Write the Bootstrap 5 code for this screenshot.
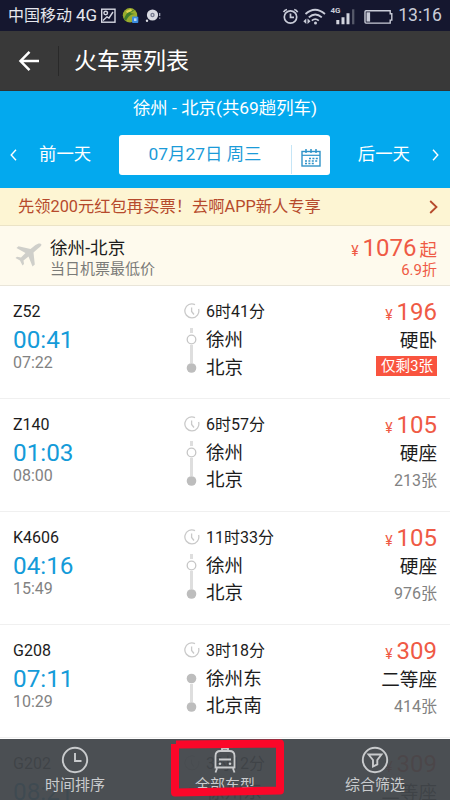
<!DOCTYPE html>
<html lang="zh-CN">
<head>
<meta charset="utf-8">
<meta name="viewport" content="width=device-width, initial-scale=1">
<title>火车票列表</title>
<link href="https://cdn.jsdelivr.net/npm/bootstrap@5.3.0/dist/css/bootstrap.min.css" rel="stylesheet">
<style>
body{font-family:Roboto,"Noto Sans CJK SC",sans-serif;height:800px;overflow:hidden;color:#1c1c1c;background:#fff;line-height:1}
svg{display:block;flex:none}
.screen{width:450px;height:800px}
.statusbar{height:31px;background:#15172f;color:#d9dbe6;padding:0 8px}
.carrier{font-size:16px;width:89px;white-space:nowrap;color:#e6e7ee}
.carrier span{font-size:17px}
.clock{font-size:17.6px;color:#c9ccd8;width:44px;text-align:right;white-space:nowrap}
.titlebar{height:60px;background:#393939;color:#fff;padding-left:18px;border-bottom:1px solid #2f3335}
.titlebar .sep{width:1px;height:30px;background:#292929;margin:0 15px 0 18px}
.titlebar h1{font-size:23px;font-weight:400;padding-top:3px}
.daybar{height:97px;background:#03a9ee;color:#fff;font-size:17.4px}
.route{height:34px;line-height:34px}
.days{height:40px;margin-top:10px;padding:0 11px 0 10px}
.prev{width:109px}
.prev span{margin-left:22px}
.next span{margin-right:22px}
.datebox{width:211px;height:40px;background:#fff;border-radius:3px;color:#1b9bd8}
.datebox .vsep{width:1px;height:29px;margin-top:10px;background:#c5e5f6}
.cal{margin:14px 9px 0}
.promo{height:38px;background:#fdf5d3;border-bottom:1px solid #ebe3c6;color:#b64a2c;font-size:16.3px;padding:2px 12px 0 18px}
.promo svg{margin-top:-2px}
.flight{height:60px;background:#fefaed;border-bottom:1px solid #e9e5d9;padding:0 13px 0 15px}
.f-text{padding-top:12px}
.f-name{font-size:17.6px;line-height:21px}
.f-sub{font-size:15px;line-height:20px;color:#7b7b78}
.price{color:#ef5a45}
.price small{font-size:14px;margin-right:4px}
.price b{font-size:24px;font-weight:400}
.from{line-height:28px;white-space:nowrap}
.from .qi{font-size:17.5px;margin-left:3px}
.off{font-size:15px;line-height:13px;margin-top:-1px}
.train{height:112.9px;border-bottom:1px solid #f0f0f0;padding:15px 13px 0}
.no{font-size:16px;line-height:21px;margin-bottom:4px}
.dep{font-size:24.3px;line-height:27px;color:#149bd9}
.arr{font-size:16px;line-height:20px;color:#828282}
.c-left{width:170px}
.c-icons{width:24px;padding-top:2px}
.c-mid{width:130px;margin-left:-1px}
.dur{font-size:16px;line-height:21px;margin-bottom:5px}
.stn{font-size:18.6px;line-height:27.5px}
.c-right{margin-top:-2px}
.c-right .price{height:27px;line-height:27px;white-space:nowrap}
.seat{font-size:18.6px;line-height:27px;margin-top:2px}
.left-n{font-size:16px;line-height:22px;color:#828282;margin-top:2px}
.few{font-size:14.6px;line-height:20px;background:#f9543f;color:#fff;padding:0 4px 0 5px;margin-top:1px}
.tabs{height:61px;background:rgba(65,70,74,.95);color:#c9cbcd;font-size:15px;padding-top:7px}
.tabs .lab{margin-top:2px;line-height:18px}
.frame{left:168px;top:736px}
</style>
<script src="https://cdn.jsdelivr.net/npm/bootstrap@5.3.0/dist/js/bootstrap.bundle.min.js"></script>
</head>
<body>
<svg width="0" height="0" class="position-absolute">
  <symbol id="trip" viewBox="0 0 18 76">
    <path d="M12 1.600A7 7 0 1 0 15.600 6M8.600 4.500V8.500L11 11.500" fill="none" stroke="#c9c9c9" stroke-width="1.300"/>
    <path d="M8.500 25v5M8.500 42v18" stroke="#dedede" stroke-width="3"/>
    <circle cx="8.500" cy="36.500" r="4.300" fill="#fff" stroke="#c6c6c6" stroke-width="1.300"/>
    <circle cx="8.500" cy="65" r="4.800" fill="#bdbdbd"/>
  </symbol>
  <symbol id="trip-full" viewBox="0 0 18 76">
    <path d="M12 1.600A7 7 0 1 0 15.600 6M8.600 4.500V8.500L11 11.500" fill="none" stroke="#c9c9c9" stroke-width="1.300"/>
    <path d="M8.500 42v18" stroke="#dedede" stroke-width="3"/>
    <circle cx="8.500" cy="36.500" r="4.800" fill="#bdbdbd"/>
    <circle cx="8.500" cy="65" r="4.800" fill="#bdbdbd"/>
  </symbol>
</svg>
<div class="screen position-relative overflow-hidden">
  <div class="statusbar d-flex align-items-center">
    <div class="carrier">中国移动 <span>4G</span></div>
    <svg width="66" height="18" viewBox="97 7 66 18">
      <g fill="none" stroke="#d5d7e2" stroke-width="1.400"><rect x="101.700" y="9.200" width="13.300" height="13"/><circle cx="105.700" cy="13" r="1.800"/><path d="M103 20.500L107 16.800L109 18L113 12"/></g>
      <circle cx="130" cy="15.300" r="7.200" fill="#9aac2d"/><path d="M124 19c2-6 6-9 11-9l-5 3 5 1c-5 0-7 3-9 7z" fill="#3f7c2b"/><path d="M126 11l5-2 1 2-5 2z" fill="#e3d451"/>
      <rect x="132" y="16.500" width="6.300" height="6.500" rx="1" fill="#3c8de0"/><rect x="134" y="18.300" width="2.500" height="2.700" fill="#b8d8f8"/>
      <circle cx="152.500" cy="15" r="5.600" fill="#d9dae2"/><circle cx="152.500" cy="15" r="2.200" fill="#777b91"/><circle cx="152.500" cy="15" r=".8" fill="#fff"/>
      <circle cx="147" cy="20.700" r="1.200" fill="#d9dae2"/><path d="M159.700 13v3M159.700 17.500v1.300" stroke="#a7aabd" stroke-width="1.200"/>
    </svg>
    <svg class="ms-auto" width="116" height="24" viewBox="282 3 116 24">
      <g fill="none" stroke="#c9ccd8" stroke-width="1.700"><circle cx="290.500" cy="16" r="6.200"/><path d="M290.500 12.500V16.300H294M283.600 11.200Q284.600 8.800 287 8.500M294.200 8.500Q296.700 8.800 297.600 11.200"/>
      <path d="M305.500 13Q315 4.500 325 13M308.800 16.400Q315.300 10.500 321.800 16.400M311.800 19.600Q315.300 16.600 318.800 19.600" stroke-width="1.800"/></g>
      <circle cx="315.500" cy="22" r="1.500" fill="#c9ccd8"/><path d="M306.300 17.500v5.500l-3-2.700zM307.500 17.500v5.500l3-2.700z" fill="#c9ccd8"/>
      <text x="330.500" y="11.500" font-size="8" font-weight="700" fill="#c9ccd8">4G</text>
      <path d="M337.800 19v4.300M343 16.300v7M348 12.300v11" stroke="#d2d4de" stroke-width="3"/><path d="M353.200 8.300v15" stroke="#555869" stroke-width="2.300"/>
      <path d="M366 9.700h24.200v3h1.600v6.400h-1.600v3H366a1 1 0 0 1-1-1V10.700a1 1 0 0 1 1-1z" fill="none" stroke="#c9ccd8" stroke-width="1.400"/><rect x="366.500" y="11.300" width="3.600" height="9.300" fill="#c9ccd8"/>
    </svg>
    <div class="clock">13:16</div>
  </div>

  <div class="titlebar d-flex align-items-center">
    <svg width="22" height="22" viewBox="0 0 22 22"><path d="M11.500 1.800L2.500 11L11.500 20.200M2.500 11H21" fill="none" stroke="#fff" stroke-width="2.500"/></svg>
    <div class="sep"></div>
    <h1 class="m-0">火车票列表</h1>
  </div>

  <div class="daybar">
    <div class="route text-center">徐州 - 北京(共69趟列车)</div>
    <div class="days d-flex align-items-center">
      <div class="prev d-flex align-items-center">
        <svg width="7" height="12" viewBox="0 0 7 12"><path d="M6 .8L1.200 6L6 11.200" fill="none" stroke="#fff" stroke-width="1.400"/></svg>
        <span>前一天</span>
      </div>
      <div class="datebox d-flex">
        <div class="flex-fill d-flex align-items-center justify-content-center">07月27日 周三</div>
        <div class="vsep"></div>
        <svg class="cal" width="20" height="18" viewBox="0 0 20 18"><g fill="none" stroke="#2f93c8"><rect x="1" y="2.500" width="18" height="14.500" stroke-width="1.400"/><path d="M1 6.300H19" stroke-width="1.200"/><path d="M5 0v4M10 0v4M15 0v4" stroke-width="1.500"/><path d="M8 9.500h9M4 12h12.500M4 14.500h9" stroke-width="1.600" stroke-dasharray="2 1.400"/></g></svg>
      </div>
      <div class="next d-flex align-items-center ms-auto">
        <span>后一天</span>
        <svg width="7" height="12" viewBox="0 0 7 12"><path d="M1 .8L5.800 6L1 11.200" fill="none" stroke="#fff" stroke-width="1.400"/></svg>
      </div>
    </div>
  </div>

  <div class="promo d-flex align-items-center justify-content-between">
    <span>先领200元红包再买票！去啊APP新人专享</span>
    <svg width="9" height="14" viewBox="0 0 9 14"><path d="M1.200 1L7.500 7L1.200 13" fill="none" stroke="#b64a2c" stroke-width="1.800"/></svg>
  </div>

  <div class="flight d-flex">
    <svg class="mt-3" width="27" height="28" viewBox="0 0 27 28"><path d="M26.300 2.200C25.500.800 22.500 1.500 20.500 3L15.500 7L3.500 4.300L1.500 6L10.500 11L6 15.500L2 14.800L.500 16L5 18.500L7.500 23.500L9 22L8.500 18.500L13.500 14.500L17.500 24.500L19.800 22.500L18.500 10.500L23 6.500C25 5 26.800 3.400 26.300 2.200Z" fill="#cfcfca"/></svg>
    <div class="ms-2 f-text">
      <div class="f-name">徐州-北京</div>
      <div class="f-sub">当日机票最低价</div>
    </div>
    <div class="price ms-auto text-end pt-2">
      <div class="from"><small>¥</small><b>1076</b><span class="qi">起</span></div>
      <div class="off">6.9折</div>
    </div>
  </div>

  <div class="train d-flex">
    <div class="c-left"><div class="no">Z52</div><div class="dep">00:41</div><div class="arr">07:22</div></div>
    <div class="c-icons"><svg width="18" height="76"><use href="#trip"/></svg></div>
    <div class="c-mid"><div class="dur">6时41分</div><div class="stn">徐州</div><div class="stn">北京</div></div>
    <div class="c-right ms-auto d-flex flex-column align-items-end"><div class="price"><small>¥</small><b>196</b></div><div class="seat">硬卧</div><div class="few">仅剩3张</div></div>
  </div>
  <div class="train d-flex">
    <div class="c-left"><div class="no">Z140</div><div class="dep">01:03</div><div class="arr">08:00</div></div>
    <div class="c-icons"><svg width="18" height="76"><use href="#trip"/></svg></div>
    <div class="c-mid"><div class="dur">6时57分</div><div class="stn">徐州</div><div class="stn">北京</div></div>
    <div class="c-right ms-auto d-flex flex-column align-items-end"><div class="price"><small>¥</small><b>105</b></div><div class="seat">硬座</div><div class="left-n">213张</div></div>
  </div>
  <div class="train d-flex">
    <div class="c-left"><div class="no">K4606</div><div class="dep">04:16</div><div class="arr">15:49</div></div>
    <div class="c-icons"><svg width="18" height="76"><use href="#trip"/></svg></div>
    <div class="c-mid"><div class="dur">11时33分</div><div class="stn">徐州</div><div class="stn">北京</div></div>
    <div class="c-right ms-auto d-flex flex-column align-items-end"><div class="price"><small>¥</small><b>105</b></div><div class="seat">硬座</div><div class="left-n">976张</div></div>
  </div>
  <div class="train d-flex">
    <div class="c-left"><div class="no">G208</div><div class="dep">07:11</div><div class="arr">10:29</div></div>
    <div class="c-icons"><svg width="18" height="76"><use href="#trip-full"/></svg></div>
    <div class="c-mid"><div class="dur">3时18分</div><div class="stn">徐州东</div><div class="stn">北京南</div></div>
    <div class="c-right ms-auto d-flex flex-column align-items-end"><div class="price"><small>¥</small><b>309</b></div><div class="seat">二等座</div><div class="left-n">414张</div></div>
  </div>
  <div class="train d-flex">
    <div class="c-left"><div class="no">G202</div><div class="dep">08:21</div></div>
    <div class="c-icons"><svg width="18" height="76"><use href="#trip-full"/></svg></div>
    <div class="c-mid"><div class="dur">3时12分</div><div class="stn">徐州东</div></div>
    <div class="c-right ms-auto d-flex flex-column align-items-end"><div class="price"><small>¥</small><b>309</b></div><div class="seat">二等座</div></div>
  </div>

  <div class="tabs position-absolute bottom-0 start-0 w-100 d-flex text-center">
    <div class="col-4 d-flex flex-column align-items-center">
      <svg width="28" height="28" viewBox="0 0 28 28"><g fill="none" stroke="#c9cbcd" stroke-width="1.900"><circle cx="14" cy="14" r="12.200"/><path d="M14 7V15H20.500"/></g></svg>
      <div class="lab">时间排序</div>
    </div>
    <div class="col-4 d-flex flex-column align-items-center">
      <svg width="28" height="28" viewBox="0 0 28 28"><g fill="none" stroke="#c9cbcd" stroke-width="1.800"><path d="M11 5V2.500H17V5M4.500 21.500V10Q4.500 5 9.500 5H18.500Q23.500 5 23.500 10V21.500ZM8 13.500H20M6 22.500L4.500 26.500M22 22.500L23.500 26.500"/></g><circle cx="9" cy="17.800" r="1.300" fill="#c9cbcd"/><circle cx="19" cy="17.800" r="1.300" fill="#c9cbcd"/></svg>
      <div class="lab">全部车型</div>
    </div>
    <div class="col-4 d-flex flex-column align-items-center">
      <svg width="28" height="28" viewBox="0 0 28 28"><g fill="none" stroke="#c9cbcd" stroke-width="1.900"><circle cx="14" cy="14" r="12.200"/><path d="M7.500 8.500H20.500L16.300 14V18.300L12 20.500V14Z"/></g></svg>
      <div class="lab">综合筛选</div>
    </div>
  </div>
  <svg class="frame position-absolute" width="120" height="64" viewBox="168 736 120 64"><path d="M180 744.500L280 743.500V790.500L175 792.500V748" fill="none" stroke="#fb0729" stroke-width="8" stroke-linecap="square" stroke-linejoin="round"/></svg>
</div>
</body>
</html>
